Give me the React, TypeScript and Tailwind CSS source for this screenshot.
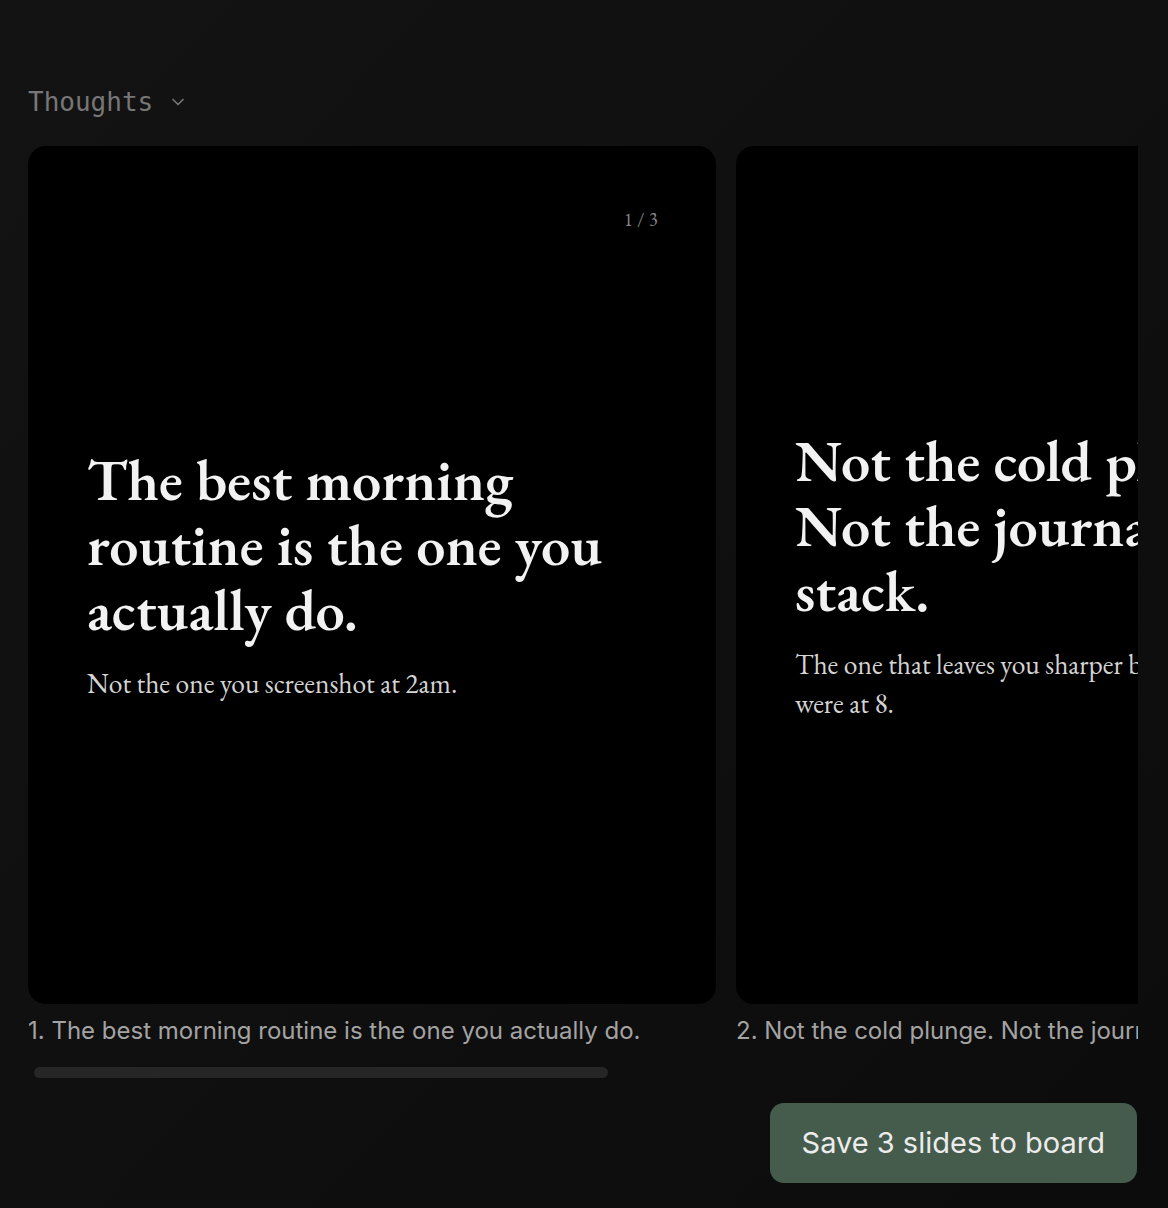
import React from 'react';
import { ChevronDown } from 'lucide-react';

interface Slide {
    title: string;
    body: string;
    caption: string;
}

const slides: Slide[] = [
    {
        title: 'The best morning routine is the one you actually do.',
        body: 'Not the one you screenshot at 2am.',
        caption: '1. The best morning routine is the one you actually do.',
    },
    {
        title: 'Not the cold plunge. Not the journaling stack.',
        body: 'The one that leaves you sharper by 10 than you were\u00A0at\u00A08.',
        caption: '2. Not the cold plunge. Not the journaling stack.',
    },
    {
        title: 'Start with one thing.',
        body: 'Keep it for a month.',
        caption: '3. Start with one thing.',
    },
];

const SlideCard: React.FC<{ slide: Slide; index: number; total: number }> = ({ slide, index, total }) => (
    <div className="flex flex-col shrink-0 w-[688px]">
        <div className="relative h-[858px] rounded-[18px] bg-black flex flex-col justify-center px-[59px] font-['EB_Garamond','Liberation_Serif',serif]">
            {index === 0 && (
                <span className="absolute top-[60px] right-[58px] text-[18px] text-[#8a8a8a] tracking-wide">
                    {index + 1} / {total}
                </span>
            )}
            <h2 className="font-semibold text-[58.5px] leading-[65px] text-[#f2f2f2]">
                {slide.title}
            </h2>
            <p className="mt-[22px] text-[27.5px] leading-[39px] text-[#d4d4d4]">
                {slide.body}
            </p>
        </div>
        <p className="mt-3 text-[24px] leading-[30px] text-[#a3a3a3] whitespace-nowrap overflow-hidden">
            {slide.caption}
        </p>
    </div>
);

const App: React.FC = () => {
    return (
        <div className="w-full h-[1208px] bg-gradient-to-br from-[#131313] to-[#0c0c0c] pl-7 pr-[30px] pt-[86px] font-['Inter',sans-serif]">
            <button className="flex items-center gap-[15px] text-[26px] leading-8 text-[#777] font-['DejaVu_Sans_Mono',monospace]">
                <span>Thoughts</span>
                <ChevronDown size={20} strokeWidth={2} className="text-[#777]" />
            </button>

            <div className="mt-7 overflow-hidden">
                <div className="flex gap-5">
                    {slides.map((s, i) => (
                        <SlideCard key={i} slide={s} index={i} total={slides.length} />
                    ))}
                </div>
            </div>

            <div className="mt-[21px] ml-1.5 w-[574px] h-[11px] rounded-full bg-[#262626]" />

            <div className="mt-[25px] flex justify-end pr-px">
                <button className="h-20 px-[32px] rounded-[14px] bg-[#455c4d] text-[29px] text-[#ececec]">
                    Save 3 slides to board
                </button>
            </div>
        </div>
    );
};

export default App;
